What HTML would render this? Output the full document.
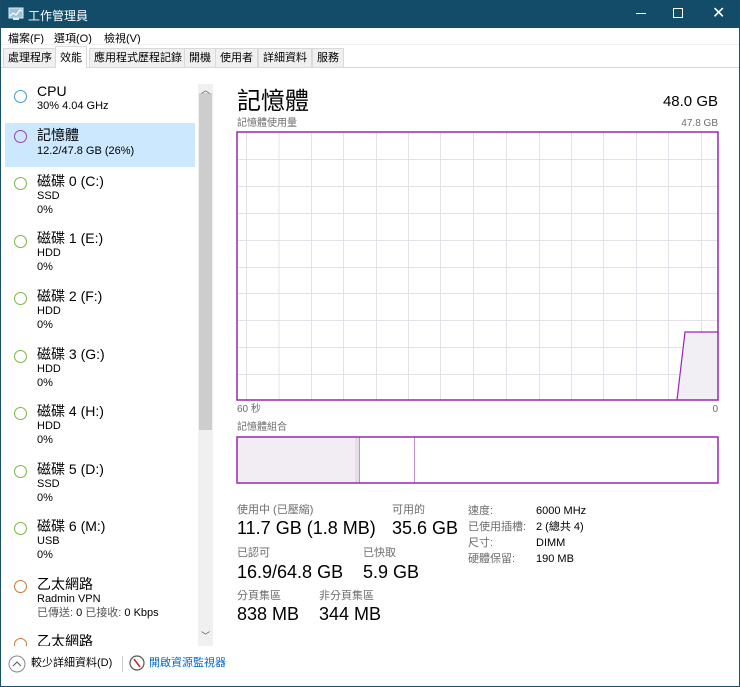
<!DOCTYPE html>
<html><head><meta charset="utf-8"><style>
*{margin:0;padding:0;box-sizing:border-box}
body{width:740px;height:687px;overflow:hidden;background:#fff;font-family:"Liberation Sans","Noto Sans CJK TC",sans-serif;color:#000;position:relative}
.a{position:absolute;white-space:nowrap}
.frame{position:absolute;left:0;top:0;width:740px;height:687px;border:1px solid #1a4f67;border-top:none}
.title{position:absolute;left:0;top:0;width:740px;height:28px;background:#124c68;color:#fff;font-size:12px}
.tab{position:absolute;top:48px;height:19px;font-size:11px;line-height:19px;padding:0 4px;border:1px solid #d9d9d9;border-bottom:none;background:#f0f0f0;color:#000}
.cir{position:absolute;width:13px;height:13px;border-radius:50%;border:1.5px solid}
.t1{font-size:14px;color:#000;line-height:17px}
.t2{font-size:11px;color:#000;line-height:13px}
.lbl{font-size:11px;color:#6d6d6d;line-height:13px}
.val{font-size:18px;color:#000;line-height:21px}
</style></head><body>
<div class="title">
<svg class="a" style="left:8px;top:7px" width="16" height="14"><rect x="1" y="1" width="14" height="10" fill="#9fc3d6" stroke="#dfeef5"/><polyline points="2,9 5,6 8,8 12,3 14,4" fill="none" stroke="#fff" stroke-width="1.2"/><rect x="5" y="11" width="6" height="2" fill="#dfeef5"/></svg>
<div class="a" style="left:28px;top:7px">工作管理員</div>
<div class="a" style="left:636px;top:13px;width:10px;height:1px;background:#fff"></div>
<div class="a" style="left:673px;top:8px;width:10px;height:10px;border:1px solid #fff"></div>
<div class="a" style="left:712px;top:3px;font-size:16px">✕</div>
</div>
<div class="a" style="left:8px;top:30px;font-size:11px">檔案(F)</div>
<div class="a" style="left:54px;top:30px;font-size:11px">選項(O)</div>
<div class="a" style="left:104px;top:30px;font-size:11px">檢視(V)</div>
<div class="a" style="left:0;top:44px;width:740px;height:1px;background:#f0f0f0"></div>
<div class="tab" style="left:3px">處理程序</div>
<div class="tab" style="left:55px;top:46px;height:22px;background:#fff;z-index:2;line-height:22px">效能</div>
<div class="tab" style="left:89px">應用程式歷程記錄</div>
<div class="tab" style="left:184px">開機</div>
<div class="tab" style="left:215px">使用者</div>
<div class="tab" style="left:258px">詳細資料</div>
<div class="tab" style="left:312px">服務</div>
<div class="a" style="left:0;top:67px;width:740px;height:1px;background:#d9d9d9"></div>

<div class="a" style="left:5px;top:123px;width:190px;height:44px;background:#cce8ff"></div>
<div class="cir" style="left:14px;top:90px;border-color:#4b97c9"></div>
<div class="a t1" style="left:37px;top:83px">CPU</div><div class="a t2" style="left:37px;top:100px">30% 4.04 GHz</div>
<div class="cir" style="left:14px;top:130px;border-color:#9b3fb0"></div>
<div class="a t1" style="left:37px;top:127px">記憶體</div><div class="a t2" style="left:37px;top:145px">12.2/47.8 GB (26%)</div>

<div class="cir" style="left:14px;top:177px;border-color:#7ab648"></div><div class="a t1" style="left:37px;top:173px">磁碟 0 (C:)</div><div class="a t2" style="left:37px;top:190px">SSD</div><div class="a t2" style="left:37px;top:204px">0%</div>
<div class="cir" style="left:14px;top:235px;border-color:#7ab648"></div><div class="a t1" style="left:37px;top:230px">磁碟 1 (E:)</div><div class="a t2" style="left:37px;top:247px">HDD</div><div class="a t2" style="left:37px;top:261px">0%</div>
<div class="cir" style="left:14px;top:292px;border-color:#7ab648"></div><div class="a t1" style="left:37px;top:288px">磁碟 2 (F:)</div><div class="a t2" style="left:37px;top:305px">HDD</div><div class="a t2" style="left:37px;top:319px">0%</div>
<div class="cir" style="left:14px;top:350px;border-color:#7ab648"></div><div class="a t1" style="left:37px;top:346px">磁碟 3 (G:)</div><div class="a t2" style="left:37px;top:363px">HDD</div><div class="a t2" style="left:37px;top:377px">0%</div>
<div class="cir" style="left:14px;top:407px;border-color:#7ab648"></div><div class="a t1" style="left:37px;top:403px">磁碟 4 (H:)</div><div class="a t2" style="left:37px;top:420px">HDD</div><div class="a t2" style="left:37px;top:434px">0%</div>
<div class="cir" style="left:14px;top:465px;border-color:#7ab648"></div><div class="a t1" style="left:37px;top:461px">磁碟 5 (D:)</div><div class="a t2" style="left:37px;top:478px">SSD</div><div class="a t2" style="left:37px;top:492px">0%</div>
<div class="cir" style="left:14px;top:522px;border-color:#7ab648"></div><div class="a t1" style="left:37px;top:518px">磁碟 6 (M:)</div><div class="a t2" style="left:37px;top:535px">USB</div><div class="a t2" style="left:37px;top:549px">0%</div>
<div class="cir" style="left:14px;top:580px;border-color:#c8773a"></div><div class="a t1" style="left:37px;top:576px">乙太網路</div><div class="a t2" style="left:37px;top:593px">Radmin VPN</div><div class="a t2" style="left:37px;top:607px;color:#555">已傳送: <span style="color:#000">0</span> 已接收: <span style="color:#000">0 Kbps</span></div>
<div style="position:absolute;left:0;top:630px;width:196px;height:16px;overflow:hidden"><div class="cir" style="left:14px;top:8px;border-color:#c8773a"></div><div class="a t1" style="left:37px;top:3px">乙太網路</div></div>

<div class="a" style="left:198px;top:84px;width:15px;height:562px;background:#f0f0f0"></div>
<div class="a" style="left:199px;top:93px;width:13px;height:337px;background:#cdcdcd"></div>
<div class="a" style="left:201px;top:83px;font-size:9px;color:#555">︿</div>
<div class="a" style="left:201px;top:629px;font-size:9px;color:#555">﹀</div>

<div class="a" style="left:237px;top:81px;font-size:24px">記憶體</div>
<div class="a" style="left:600px;top:93px;width:118px;text-align:right;font-size:15px">48.0 GB</div>
<div class="a lbl" style="left:237px;top:117px;font-size:10px">記憶體使用量</div>
<div class="a lbl" style="left:618px;top:117px;width:100px;text-align:right;font-size:10px">47.8 GB</div>
<svg class="a" style="left:236px;top:131px" width="484" height="272">
<g stroke="#e6e0ea" stroke-width="1">
<path d="M10.5 1V270M43 1V270M75.5 1V270M107.5 1V270M140.5 1V270M172.5 1V270M204.5 1V270M237.5 1V270M270.5 1V270M303.5 1V270M335.5 1V270M367.5 1V270M400.5 1V270M432.5 1V270M465.5 1V270"/>
<path d="M1 28.5H482M1 55.5H482M1 82.5H482M1 109.5H482M1 136.5H482M1 162.5H482M1 189.5H482M1 216.5H482M1 243.5H482"/>
</g>
<polygon points="441,269 449,201 482,201 482,269" fill="#f1edf3" opacity=".9"/>
<polyline points="441,269 449,201 482,201" fill="none" stroke="#9528b4" stroke-width="1.2"/>
<rect x="1" y="1" width="481" height="268" fill="none" stroke="#9528b4" stroke-width="1.5"/>
</svg>
<div class="a lbl" style="left:237px;top:403px;font-size:10px">60 秒</div>
<div class="a lbl" style="left:700px;top:403px;width:18px;text-align:right;font-size:10px">0</div>
<div class="a lbl" style="left:237px;top:421px;font-size:10px">記憶體組合</div>
<svg class="a" style="left:236px;top:436px" width="484" height="49">
<rect x="1" y="1" width="118" height="46" fill="#f1edf3"/>
<rect x="119" y="1" width="4" height="46" fill="#e6dcea"/>
<path d="M123.5 1V47M178.5 1V47" stroke="#c58fd4"/>
<rect x="1" y="1" width="481" height="46" fill="none" stroke="#9528b4" stroke-width="1.5"/>
</svg>

<div class="a lbl" style="left:237px;top:504px">使用中 (已壓縮)</div><div class="a val" style="left:237px;top:518px">11.7 GB (1.8 MB)</div>
<div class="a lbl" style="left:392px;top:504px">可用的</div><div class="a val" style="left:392px;top:518px">35.6 GB</div>
<div class="a lbl" style="left:237px;top:547px">已認可</div><div class="a val" style="left:237px;top:562px">16.9/64.8 GB</div>
<div class="a lbl" style="left:363px;top:547px">已快取</div><div class="a val" style="left:363px;top:562px">5.9 GB</div>
<div class="a lbl" style="left:237px;top:590px">分頁集區</div><div class="a val" style="left:237px;top:604px">838 MB</div>
<div class="a lbl" style="left:319px;top:590px">非分頁集區</div><div class="a val" style="left:319px;top:604px">344 MB</div>
<div class="a lbl" style="left:468px;top:505px">速度:</div><div class="a t2" style="left:536px;top:505px">6000 MHz</div>
<div class="a lbl" style="left:468px;top:521px">已使用插槽:</div><div class="a t2" style="left:536px;top:521px">2 (總共 4)</div>
<div class="a lbl" style="left:468px;top:537px">尺寸:</div><div class="a t2" style="left:536px;top:537px">DIMM</div>
<div class="a lbl" style="left:468px;top:553px">硬體保留:</div><div class="a t2" style="left:536px;top:553px">190 MB</div>

<svg class="a" style="left:8px;top:655px" width="18" height="18"><circle cx="9" cy="9" r="8" fill="none" stroke="#888"/><polyline points="5,11 9,7 13,11" fill="none" stroke="#666" stroke-width="1.2"/></svg>
<div class="a t2" style="left:31px;top:657px">較少詳細資料(D)</div>
<div class="a" style="left:122px;top:656px;width:1px;height:16px;background:#ccc"></div>
<svg class="a" style="left:129px;top:655px" width="16" height="16"><circle cx="8" cy="8" r="7" fill="#fff" stroke="#555" stroke-width="1.2"/><line x1="5" y1="4" x2="11" y2="12" stroke="#c22" stroke-width="1.5"/></svg>
<div class="a t2" style="left:149px;top:657px;color:#0066cc">開啟資源監視器</div>
<div class="frame"></div>
</body></html>
